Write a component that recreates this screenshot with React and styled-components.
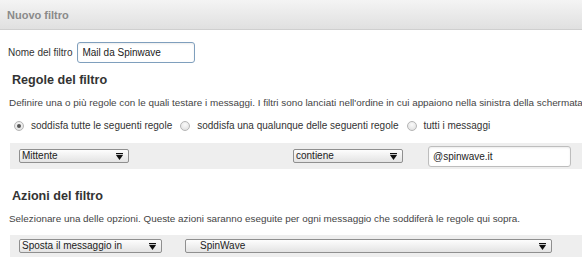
import React from "react";
import styled, { createGlobalStyle } from "styled-components";

const Global = createGlobalStyle`
  html, body { margin: 0; padding: 0; background: #fff; }
  body {
    font-family: "Liberation Sans", Arial, sans-serif;
    color: #333;
    width: 582px;
    height: 268px;
    overflow: hidden;
  }
`;

const Page = styled.div`
  width: 582px;
  display: flex;
  flex-direction: column;
`;

const Header = styled.div`
  height: 29px;
  border-bottom: 1px solid #cfcfcf;
  background: linear-gradient(#f4f4f4, #e0e0e0);
  display: flex;
  align-items: center;
  padding-left: 7px;
  font-size: 11px;
  font-weight: bold;
  color: #8a8a8a;
`;

const NameRow = styled.div`
  display: flex;
  align-items: center;
  gap: 5px;
  margin-top: 12px;
  padding-left: 8px;
  font-size: 10px;
  color: #333;
`;

const TextInput = styled.div`
  box-sizing: border-box;
  width: ${(p) => p.$w}px;
  height: 21px;
  border: 1px solid ${(p) => p.$border};
  border-radius: 3px;
  background: #fff;
  box-shadow: inset 0 1px 2px rgba(0, 0, 0, 0.08);
  display: flex;
  align-items: center;
  padding-left: 4px;
  font-size: 10px;
  color: #222;
`;

const Heading = styled.h2`
  margin: ${(p) => p.$mt}px 0 0 12px;
  font-size: 12.6px;
  line-height: 18px;
  font-weight: bold;
  color: #333;
`;

const Desc = styled.p`
  margin: ${(p) => p.$mt}px 0 0 9px;
  font-size: 9.9px;
  line-height: 14px;
  color: #444;
  white-space: nowrap;
`;

const RadioRow = styled.div`
  display: flex;
  align-items: center;
  margin: 9px 0 0 14px;
  font-size: 10px;
  line-height: 14px;
  color: #333;
  white-space: nowrap;
`;

const RadioItem = styled.label`
  display: flex;
  align-items: center;
  gap: 7px;
  margin-right: 8px;
`;

const RadioDot = styled.span`
  box-sizing: border-box;
  width: 10px;
  height: 10px;
  border-radius: 50%;
  border: 1px solid #b5b5b5;
  background: radial-gradient(circle at 50% 35%, #fafafa, #dcdcdc);
  display: flex;
  align-items: center;
  justify-content: center;
  &::after {
    content: "";
    width: 4px;
    height: 4px;
    border-radius: 50%;
    background: ${(p) => (p.$checked ? "#555" : "transparent")};
  }
`;

const Band = styled.div`
  margin: ${(p) => p.$mt}px 0 0 10px;
  height: ${(p) => p.$h}px;
  background: #eeeeee;
  display: grid;
  grid-template-columns: ${(p) => p.$cols};
  align-items: center;
  padding-left: 9px;
`;

const Select = styled.div`
  box-sizing: border-box;
  width: ${(p) => p.$w}px;
  height: 14px;
  border: 1px solid #8f8f8f;
  border-radius: 2px;
  background: linear-gradient(#fdfdfd, #e3e3e3);
  display: flex;
  align-items: center;
  justify-content: space-between;
  padding: 0 5px 0 ${(p) => p.$pl || 2}px;
  font-size: 10px;
  line-height: 12px;
  color: #222;
`;

const Arrow = () => (
  <svg width="7" height="7" viewBox="0 0 7 7">
    <rect x="0" y="0" width="7" height="1.2" fill="#111" />
    <polygon points="0,2 7,2 3.5,7" fill="#111" />
  </svg>
);

const Radio = ({ checked, children }) => (
  <RadioItem>
    <RadioDot $checked={checked} />
    {children}
  </RadioItem>
);

export default function App() {
  return (
    <Page>
      <Global />
      <Header>Nuovo filtro</Header>
      <NameRow>
        Nome del filtro
        <TextInput $w={118} $border="#7f9fbd">Mail da Spinwave</TextInput>
      </NameRow>
      <Heading $mt={8}>Regole del filtro</Heading>
      <Desc $mt={7}>
        Definire una o più regole con le quali testare i messaggi. I filtri sono lanciati nell'ordine in cui appaiono nella sinistra della schermata
      </Desc>
      <RadioRow>
        <Radio checked>soddisfa tutte le seguenti regole</Radio>
        <Radio>soddisfa una qualunque delle seguenti regole</Radio>
        <Radio>tutti i messaggi</Radio>
      </RadioRow>
      <Band $mt={10} $h={26} $cols="274px 135px 1fr">
        <Select $w={110}>
          Mittente <Arrow />
        </Select>
        <Select $w={110}>
          contiene <Arrow />
        </Select>
        <TextInput $w={143} $border="#bdbdbd">@spinwave.it</TextInput>
      </Band>
      <Heading $mt={18}>Azioni del filtro</Heading>
      <Desc $mt={7}>
        Selezionare una delle opzioni. Queste azioni saranno eseguite per ogni messaggio che soddiferà le regole qui sopra.
      </Desc>
      <Band $mt={9} $h={22} $cols="166px 1fr">
        <Select $w={143}>
          Sposta il messaggio in <Arrow />
        </Select>
        <Select $w={367} $pl={14}>
          SpinWave <Arrow />
        </Select>
      </Band>
    </Page>
  );
}
